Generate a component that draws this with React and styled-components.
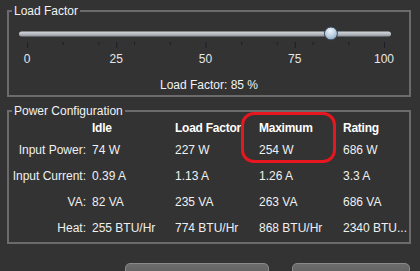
import React from 'react';
import styled, { createGlobalStyle } from 'styled-components';

const GlobalStyle = createGlobalStyle`
  html, body {
    margin: 0;
    padding: 0;
    background: #333333;
    overflow: hidden;
  }
  body {
    font-family: 'Liberation Sans', Arial, sans-serif;
    font-size: 12px;
    color: #eeeeee;
  }
`;

const Page = styled.div`
  position: relative;
  width: 420px;
  height: 271px;
  box-sizing: border-box;
  padding: 4px 9px 0 7px;
  overflow: hidden;
`;

const Group = styled.fieldset`
  margin: ${(p) => p.$top || 0}px 0 0 0;
  padding: 0 0 ${(p) => p.$bottom || 0}px 0;
  border: 2px solid #6b6b6b;
  min-width: 0;
`;

const Legend = styled.legend`
  margin-left: 3px;
  padding: 0 2px;
  font-size: 12px;
  line-height: 14px;
  color: #f2f2f2;
`;

const SliderArt = styled.svg`
  display: block;
  margin-top: 6px;
`;

const TickLabels = styled.div`
  display: flex;
  justify-content: space-between;
  margin: 2px 0 0 18px;
  width: 357px;
  height: 14px;
  line-height: 14px;
`;

const TickLabel = styled.span`
  width: 0;
  display: flex;
  justify-content: center;
  white-space: nowrap;
  color: #e6e6e6;
`;

const Status = styled.div`
  margin-top: 12px;
  text-align: center;
  line-height: 14px;
  color: #f2f2f2;
`;

const Table = styled.div`
  display: grid;
  grid-template-columns: 83px 83px 84px 84px 1fr;
  grid-template-rows: 19px repeat(4, 26px);
  align-items: center;
`;

const Cell = styled.div`
  white-space: nowrap;
  overflow: hidden;
  line-height: 14px;
  color: #f0f0f0;
`;

const Head = styled(Cell)`
  font-weight: bold;
  color: #ffffff;
  letter-spacing: -0.25px;
`;

const RowLabel = styled(Cell)`
  text-align: right;
  padding-right: 6px;
`;

const Highlight = styled.div`
  position: absolute;
  left: 241px;
  top: 112px;
  width: 95px;
  height: 51px;
  box-sizing: border-box;
  border: 3px solid #e8161e;
  border-radius: 13px;
  pointer-events: none;
`;

const ButtonBar = styled.div`
  display: flex;
  justify-content: flex-end;
  gap: 23px;
  margin-top: 19px;
  padding-right: 1px;
`;

const Button = styled.button`
  width: ${(p) => p.$w}px;
  height: 28px;
  flex: none;
  border: 1px solid #8a8a8a;
  border-radius: 5px;
  background: linear-gradient(#6c6c6c, #505050);
  color: #eeeeee;
  font-family: inherit;
  font-size: 12px;
`;

const TRACK_X0 = 18;
const TRACK_SPAN = 357;

const Slider = ({ value }) => {
  const ticks = [];
  for (let v = 0; v <= 100; v += 5) {
    const major = v % 25 === 0;
    if (!major && v % 10 !== 0) continue;
    const x = TRACK_X0 + (v / 100) * TRACK_SPAN + 0.5;
    ticks.push(
      <line key={v} x1={x} x2={x} y1={18} y2={major ? 24 : 21} stroke="#1c1f2a" strokeWidth="1" />
    );
  }
  const tx = TRACK_X0 + (value / 100) * TRACK_SPAN + 0.5;
  return (
    <SliderArt width="400" height="26" viewBox="0 0 400 26">
      <defs>
        <linearGradient id="track" x1="0" y1="0" x2="0" y2="1">
          <stop offset="0" stopColor="#d4d7dc" />
          <stop offset="0.5" stopColor="#b8bbc2" />
          <stop offset="1" stopColor="#8c9098" />
        </linearGradient>
        <radialGradient id="thumb" cx="0.45" cy="0.3" r="0.75">
          <stop offset="0" stopColor="#eef4fa" />
          <stop offset="0.6" stopColor="#b4cade" />
          <stop offset="1" stopColor="#7f9ab4" />
        </radialGradient>
      </defs>
      <rect x="10" y="7.5" width="372" height="5" rx="2.5" fill="url(#track)" />
      {ticks}
      <circle cx={tx} cy="9.5" r="6.5" fill="url(#thumb)" stroke="#34404e" strokeWidth="1" />
    </SliderArt>
  );
};

const columns = ['Idle', 'Load Factor', 'Maximum', 'Rating'];
const rows = [
  ['Input Power:', '74 W', '227 W', '254 W', '686 W'],
  ['Input Current:', '0.39 A', '1.13 A', '1.26 A', '3.3 A'],
  ['VA:', '82 VA', '235 VA', '263 VA', '686 VA'],
  ['Heat:', '255 BTU/Hr', '774 BTU/Hr', '868 BTU/Hr', '2340 BTU...'],
];

export default function App() {
  const load = 85;
  return (
    <>
      <GlobalStyle />
      <Page>
        <Group $bottom={3}>
          <Legend>Load Factor</Legend>
          <Slider value={load} />
          <TickLabels>
            {[0, 25, 50, 75, 100].map((v) => (
              <TickLabel key={v}>{v}</TickLabel>
            ))}
          </TickLabels>
          <Status>Load Factor: {load} %</Status>
        </Group>

        <Group $top={7} $bottom={1}>
          <Legend>Power Configuration</Legend>
          <Table>
            <span />
            {columns.map((c) => (
              <Head key={c}>{c}</Head>
            ))}
            {rows.map((r) => (
              <React.Fragment key={r[0]}>
                <RowLabel>{r[0]}</RowLabel>
                {r.slice(1).map((v, i) => (
                  <Cell key={i}>{v}</Cell>
                ))}
              </React.Fragment>
            ))}
          </Table>
        </Group>

        <ButtonBar>
          <Button $w={144} />
          <Button $w={118} />
        </ButtonBar>

        <Highlight />
      </Page>
    </>
  );
}
